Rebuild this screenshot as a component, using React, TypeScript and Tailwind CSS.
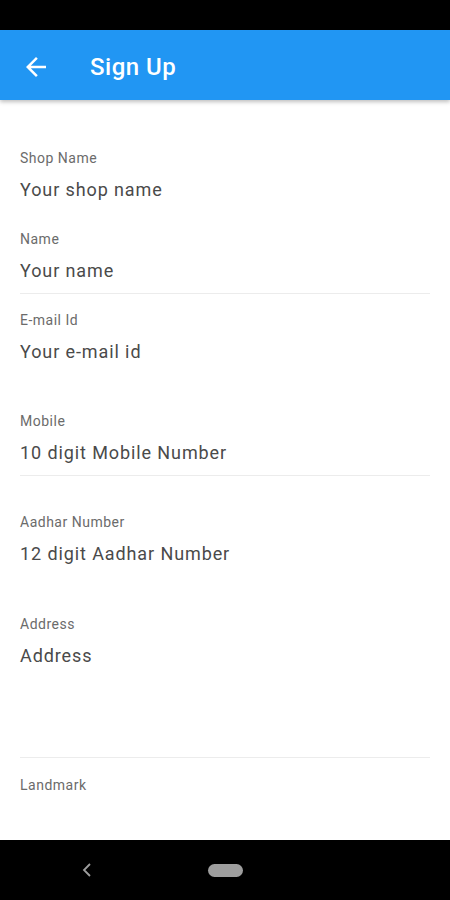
import React from 'react';

interface FieldProps {
  label: string;
  value?: string;
  className: string;
  lineClass?: string;
}

const Field: React.FC<FieldProps> = ({ label, value, className, lineClass }) => (
  <div className={`flex flex-col ${className}`}>
    <p className="text-[14px] leading-[16px] tracking-[0.5px] text-[#6b6b6b]">{label}</p>
    {value && (
      <p className="mt-[12px] text-[18px] leading-[24px] tracking-[0.9px] text-[#4a4a4a]">{value}</p>
    )}
    {lineClass && <div className={`h-px bg-[#ececec] ${lineClass}`} />}
  </div>
);

const App: React.FC = () => {
  return (
    <div className="flex h-[900px] w-[450px] flex-col overflow-hidden bg-white font-['Roboto',sans-serif]">
      {/* status bar */}
      <div className="h-[30px] shrink-0 bg-black" />

      <header className="relative z-10 flex h-[70px] shrink-0 items-center bg-[#2196f3] pt-[3px] shadow-[0_2px_4px_rgba(0,0,0,0.25)]">
        <button className="ml-[21px] flex h-[30px] w-[30px] items-center justify-center">
          <svg width="30" height="30" viewBox="0 0 24 24" fill="#ffffff">
            <path d="M20 11H7.83l5.59-5.59L12 4l-8 8 8 8 1.41-1.41L7.83 13H20v-2z" />
          </svg>
        </button>
        <h1 className="ml-[39px] text-[24px] font-medium tracking-[0.5px] text-white">Sign Up</h1>
      </header>

      <main className="flex-1 px-[20px] pt-[50px]">
        <Field label="Shop Name" value="Your shop name" className="h-[81px]" />
        <Field label="Name" value="Your name" className="h-[81px]" lineClass="mt-[10px]" />
        <Field label="E-mail Id" value="Your e-mail id" className="h-[101px]" />
        <Field label="Mobile" value="10 digit Mobile Number" className="h-[101px]" lineClass="mt-[10px]" />
        <Field label="Aadhar Number" value="12 digit Aadhar Number" className="h-[102px]" />
        <Field label="Address" value="Address" className="h-[161px]" lineClass="mt-[89px]" />
        <Field label="Landmark" className="h-[40px]" />
      </main>

      {/* nav bar */}
      <nav className="flex h-[60px] shrink-0 items-center bg-black">
        <svg className="ml-[81px]" width="12" height="16" viewBox="0 0 12 16" fill="none">
          <path d="M9 2 L3 8 L9 14" stroke="#9e9e9e" strokeWidth="1.8" />
        </svg>
        <div className="ml-[115px] h-[13px] w-[35px] rounded-full bg-[#9e9e9e]" />
      </nav>
    </div>
  );
};

export default App;
